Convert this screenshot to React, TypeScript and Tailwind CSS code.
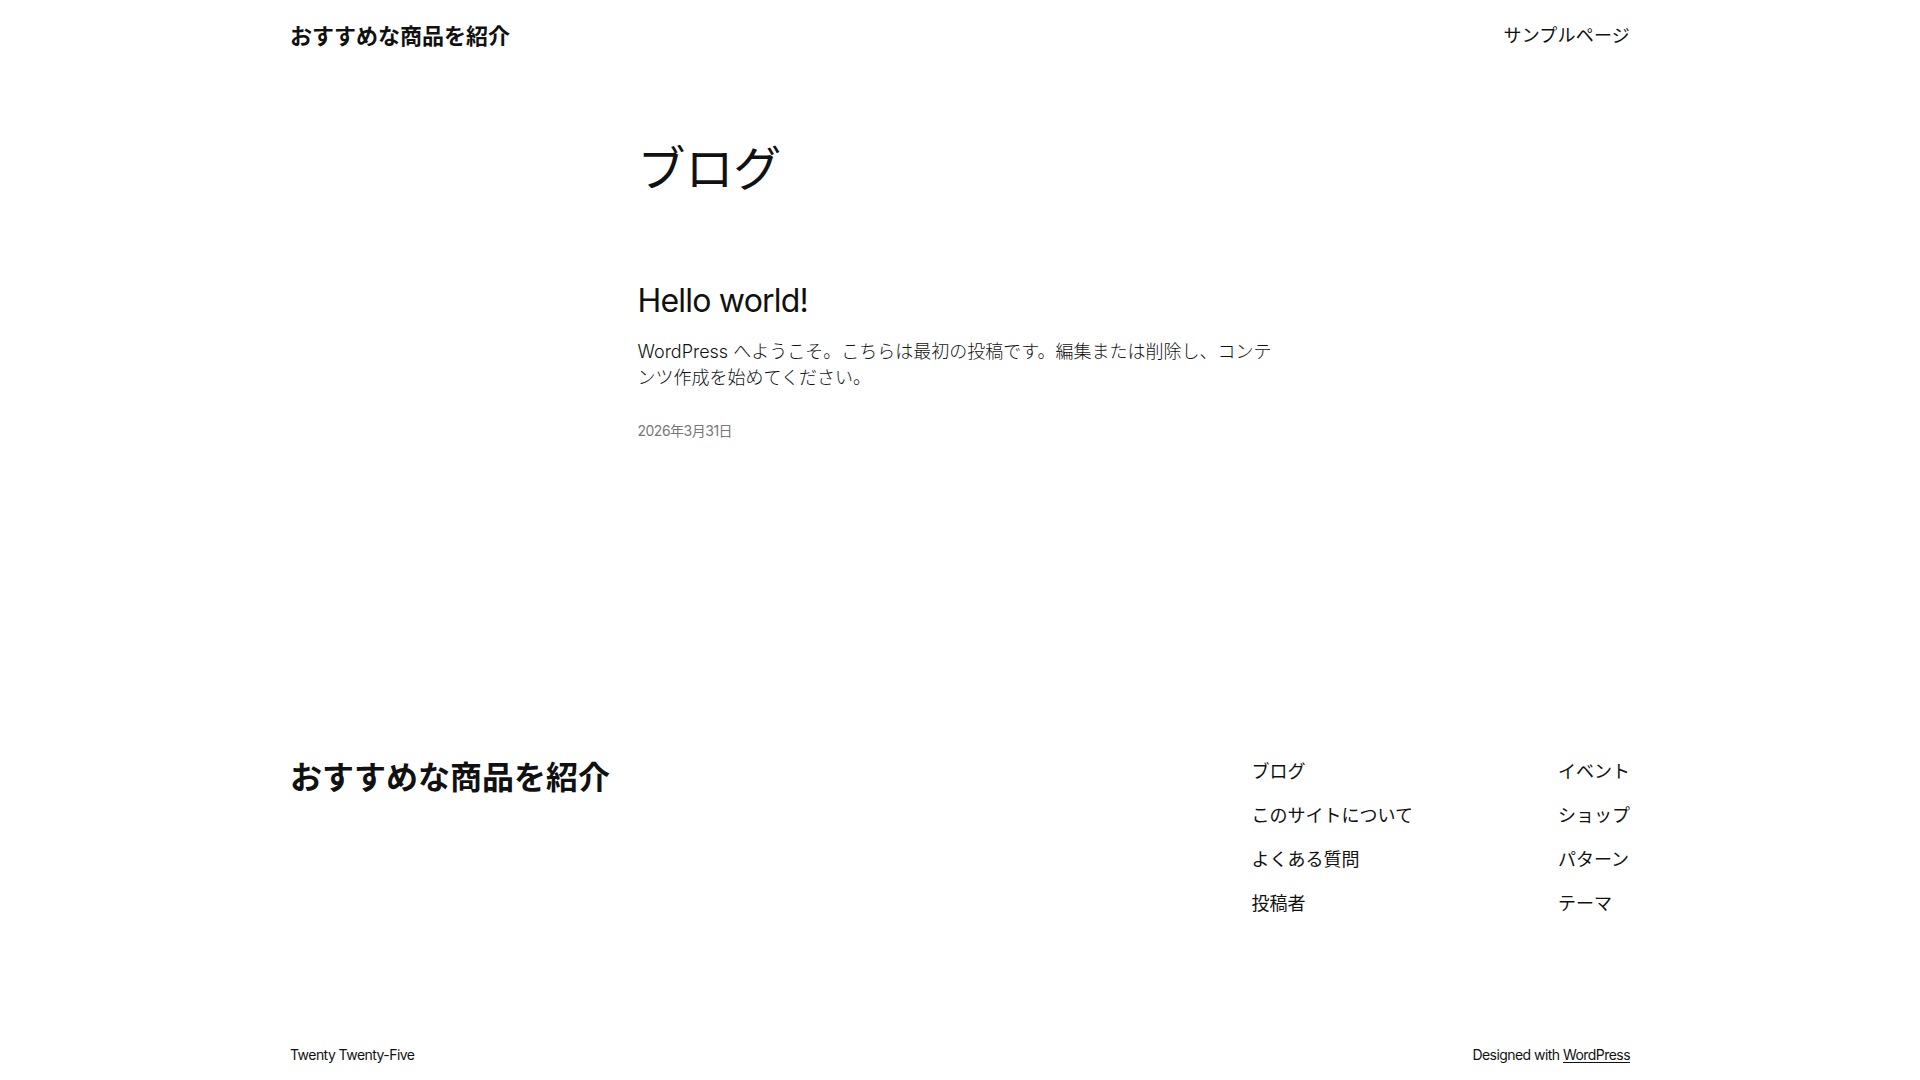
const font = { fontFamily: 'Inter, "Noto Sans CJK JP", sans-serif' };

const navLeft = ['ブログ', 'このサイトについて', 'よくある質問', '投稿者'];
const navRight = ['イベント', 'ショップ', 'パターン', 'テーマ'];

export default function App() {
    return (
        <div className="min-h-[1080px] w-full bg-white text-[#111111]" style={font}>
            <div className="mx-auto flex w-[1340px] flex-col">
                {/* header */}
                <header className="flex items-center justify-between pt-[21px] pb-[19px]">
                    <a className="text-[22px] font-bold leading-[30px]">おすすめな商品を紹介</a>
                    <nav className="text-[18px] leading-[30px] tracking-[0.2px]">サンプルページ</nav>
                </header>

                {/* main */}
                <main className="mx-auto w-[645px] pt-[72px]">
                    <h1 className="text-[48px] leading-[54px] tracking-[-0.1px]">ブログ</h1>
                    <article className="mt-[86px]">
                        <h2 className="text-[32px] leading-[38px] tracking-[-0.8px]">Hello world!</h2>
                        <p className="mt-[19px] text-[18px] leading-[26px] font-light">
                            WordPress へようこそ。こちらは最初の投稿です。編集または削除し、コンテンツ作成を始めてください。
                        </p>
                        <div className="mt-[30px] text-[14px] leading-[20px] tracking-[-0.5px] text-[#777777]">2026年3月31日</div>
                    </article>
                </main>

                {/* footer */}
                <footer className="mt-[318px]">
                    <div className="flex items-start justify-between">
                        <div className="text-[32px] font-semibold leading-[38px]">おすすめな商品を紹介</div>
                        <div className="flex gap-[145px] text-[18px] leading-[26px]">
                            <ul className="flex flex-col gap-[18px]">
                                {navLeft.map((item) => (
                                    <li key={item}>{item}</li>
                                ))}
                            </ul>
                            <ul className="flex flex-col gap-[18px]">
                                {navRight.map((item) => (
                                    <li key={item}>{item}</li>
                                ))}
                            </ul>
                        </div>
                    </div>
                    <div className="mt-[128px] flex items-center justify-between pb-[17px] text-[14px] leading-[20px] tracking-[-0.55px]">
                        <span>Twenty Twenty-Five</span>
                        <span>
                            Designed with <a className="underline underline-offset-2">WordPress</a>
                        </span>
                    </div>
                </footer>
            </div>
        </div>
    );
}
